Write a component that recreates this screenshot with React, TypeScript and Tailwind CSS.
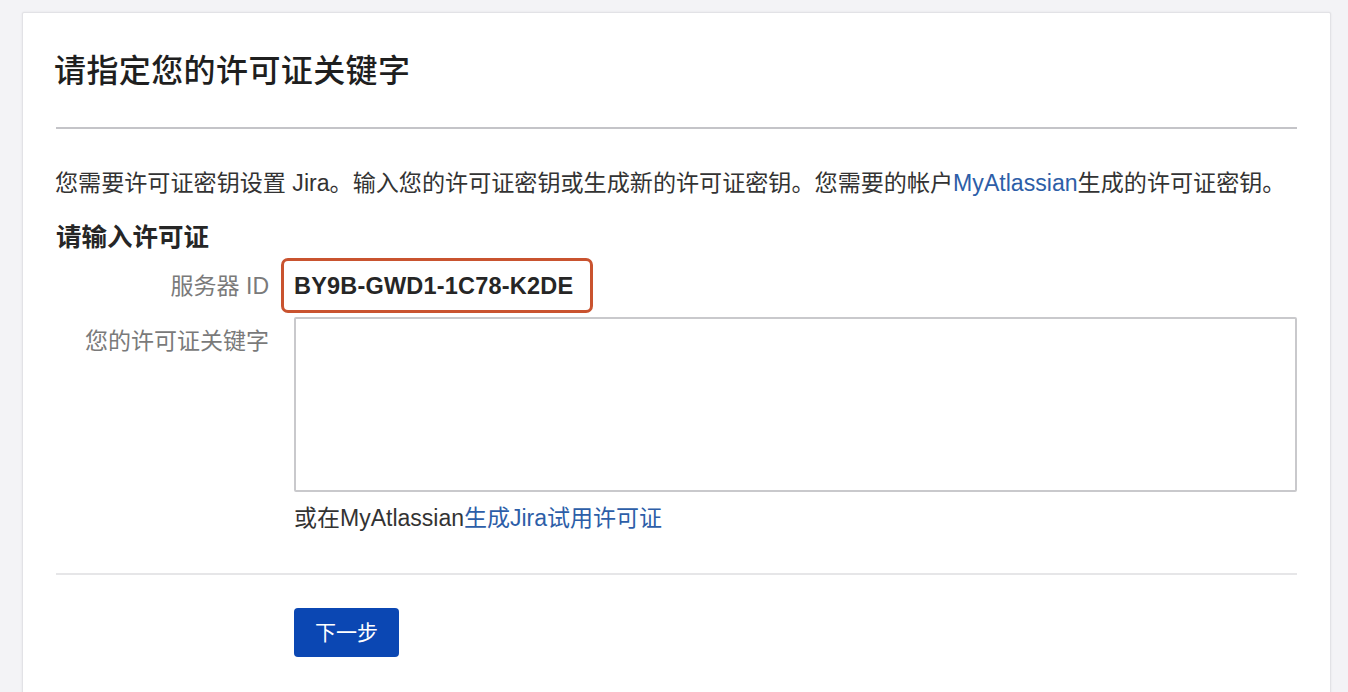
import React from "react";

const font = { fontFamily: '"Liberation Sans", "Noto Sans CJK SC", sans-serif' };

export default function App() {
  return (
    <div className="min-h-[692px] w-full bg-[#f3f3f6] pt-[12px] pl-[22px] pr-[17px] overflow-hidden" style={font}>
      <div className="h-[700px] bg-white border border-[#e2e2e6] rounded-[2px] shadow-[0_0_2px_rgba(0,0,0,0.08)] px-[33px]">
        <div className="h-[114px] flex items-center pt-[2px]">
          <h1 className="text-[32px] leading-[40px] font-medium text-[#1f1f1f] tracking-[0.4px] -ml-[2px]">请指定您的许可证关键字</h1>
        </div>
        <div className="h-[2px] bg-[#c4c4c8]" />
        <p className="mt-[40px] text-[23.1px] leading-[28px] text-[#333333] whitespace-nowrap -ml-[1px]">
          您需要许可证密钥设置 Jira。输入您的许可证密钥或生成新的许可证密钥。您需要的帐户<span className="text-[#2d5ea8]">MyAtlassian</span>生成的许可证密钥。
        </p>
        <h2 className="mt-[26px] text-[25.5px] leading-[28px] font-bold text-[#262626]">请输入许可证</h2>
        <div className="mt-[21px] flex items-center h-[28px]">
          <div className="w-[213px] text-right text-[23px] leading-[28px] text-[#7a7a7a]">服务器 ID</div>
          <div className="ml-[25px] relative">
            <span className="text-[23.5px] leading-[28px] font-bold text-[#262626] tracking-[0.2px]">BY9B-GWD1-1C78-K2DE</span>
            <div className="absolute left-[-13px] right-[-20px] top-[-14px] bottom-[-12px] border-[3px] border-[#c9532f] rounded-[7px]" />
          </div>
        </div>
        <div className="mt-[17px] flex">
          <div className="w-[213px] pt-[10px] text-right text-[23px] leading-[28px] text-[#7a7a7a]">您的许可证关键字</div>
          <div className="ml-[25px] flex-1">
            <textarea className="block w-full h-[175px] border-2 border-[#c9c9cc] rounded-[2px] bg-white resize-none outline-none" />
            <div className="mt-[12px] text-[23px] leading-[28px] text-[#333333]">
              或在MyAtlassian<span className="text-[#2d5ea8]">生成Jira试用许可证</span>
            </div>
          </div>
        </div>
        <div className="mt-[41px] h-[2px] bg-[#e6e6e8]" />
        <div className="mt-[33px] pl-[238px]">
          <button className="w-[105px] h-[49px] rounded-[4px] bg-[#0b47b3] text-white text-[21px] leading-[28px]">下一步</button>
        </div>
      </div>
    </div>
  );
}
